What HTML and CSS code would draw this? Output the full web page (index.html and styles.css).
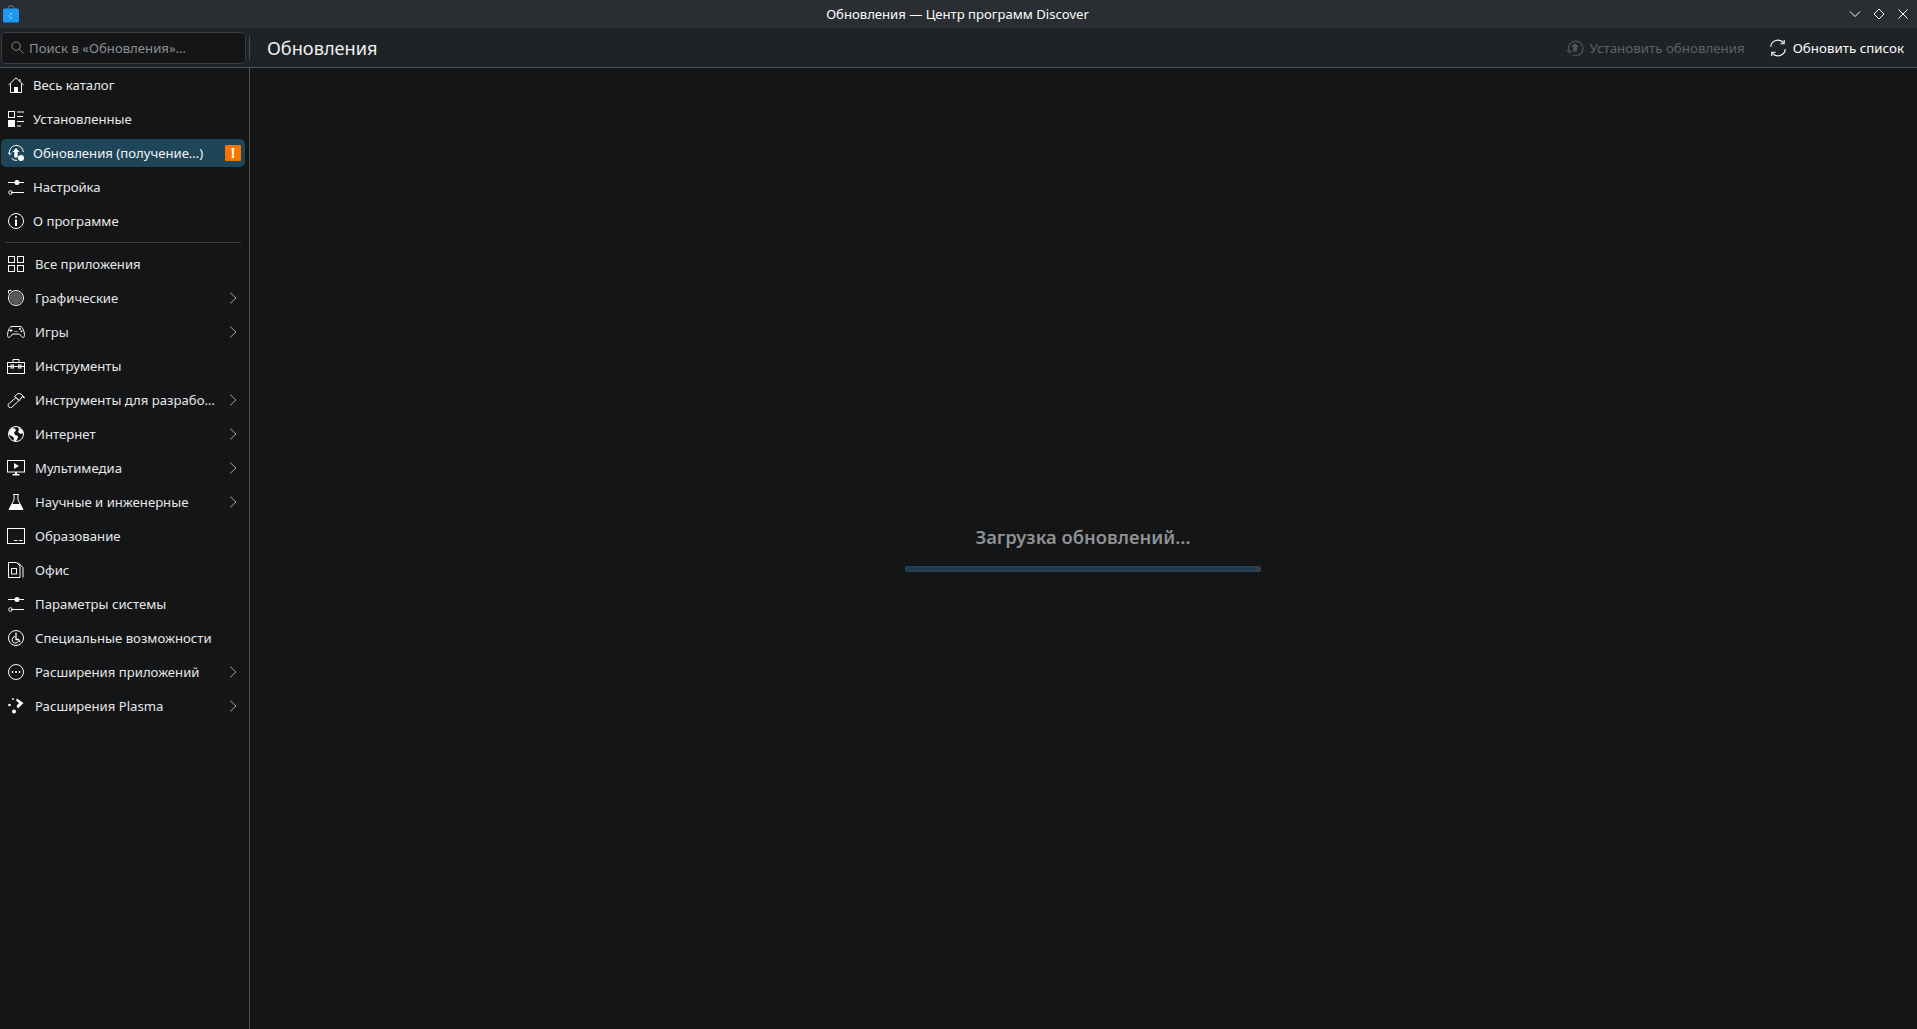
FILE: index.html
```html
<!DOCTYPE html>
<html lang="ru">
<head>
<meta charset="utf-8">
<title>Обновления — Центр программ Discover</title>
<link rel="stylesheet" href="styles.css">
</head>
<body>
<div class="window">
  <header class="titlebar">
    <svg class="app-icon" viewBox="0 0 16 18"><path class="bag-handle" d="M5 6V3a3 2.2 0 0 1 6 0v3"/><rect class="bag" x="0" y="3.500" width="16" height="14" rx="1.500"/><circle class="bag-dot" cx="8" cy="9" r=".8"/><circle class="bag-dot" cx="6" cy="11" r=".6"/><circle class="bag-dot" cx="8" cy="13" r=".7"/></svg>
    <div class="title">Обновления — Центр программ Discover</div>
    <div class="win-controls">
      <svg class="wc" viewBox="0 0 12 12"><path d="M1 3.500l5 5 5-5"/></svg>
      <svg class="wc" viewBox="0 0 12 12"><path d="M6 1l5 5-5 5-5-5z"/></svg>
      <svg class="wc" viewBox="0 0 12 12"><path d="M1.500 1.500l9 9M10.500 1.500l-9 9"/></svg>
    </div>
  </header>
  <div class="toolbar">
    <div class="search">
      <svg class="search-icon" viewBox="0 0 14 14"><circle cx="5.500" cy="5.500" r="4.500"/><path d="M9 9l4.500 4.500"/></svg>
      <span>Поиск в «Обновления»…</span>
    </div>
    <div class="tb-sep"></div>
    <h1 class="page-title">Обновления</h1>
    <div class="actions">
      <div class="action disabled">
        <svg class="ic16" viewBox="0 0 16 16"><path d="M3 11.500A6.500 6.500 0 1 1 6 14.300"/><path d="M1 10l2 2 2-2"/><path class="fill" d="M8 3.500L11.500 7H9.700v4H6.300V7H4.500z"/></svg>
        <span>Установить обновления</span>
      </div>
      <div class="action">
        <svg class="ic16" viewBox="0 0 16 16"><path d="M1.500 7A6.500 6.500 0 0 1 13 3.500"/><path d="M13.500.8v3.400h-3.400"/><path d="M14.500 9A6.500 6.500 0 0 1 3 12.500"/><path d="M2.500 15.200v-3.400h3.400"/></svg>
        <span>Обновить список</span>
      </div>
    </div>
  </div>
  <div class="main">
    <nav class="sidebar">
      <a class="item">
        <svg class="ic" viewBox="0 0 16 16"><path d="M.5 8L8 .8 15.500 8M2.500 6.500v9h11v-9"/><path class="fill" d="M6 15.500V10h4v5.500z"/><path d="M12 2v2.500"/></svg>
        <span class="label">Весь каталог</span>
      </a>
      <a class="item">
        <svg class="ic" viewBox="0 0 16 16"><rect x=".5" y=".5" width="6" height="6"/><rect class="fill" x="0" y="9" width="7" height="7"/><path d="M9 1h7M9 5.500h6M9 10.500h7M9 15h4"/></svg>
        <span class="label">Установленные</span>
      </a>
      <a class="item selected">
        <svg class="ic" viewBox="0 0 16 16"><path d="M1.500 9A7 7 0 1 1 15.300 7"/><path d="M.2 7.500l1.500 2.200 2-1.700"/><path d="M3.500 13.500A7 7 0 0 0 9 15.400"/><path class="fill" d="M8 3L11.500 7H9.700V12.500H6.300V7H4.500z"/><circle class="fill" cx="13" cy="13" r="3"/></svg>
        <span class="label">Обновления (получение…)</span>
        <span class="badge">!</span>
      </a>
      <a class="item">
        <svg class="ic" viewBox="0 0 16 16"><path d="M0 3.500h16M3 13.500h13"/><circle class="fill" cx="9" cy="3.500" r="2.500"/><circle cx="2.500" cy="13.500" r="1.800"/></svg>
        <span class="label">Настройка</span>
      </a>
      <a class="item">
        <svg class="ic" viewBox="0 0 16 16"><circle cx="8" cy="8" r="7.500"/><path d="M8 6.500V13" stroke-width="2"/><circle class="fill" cx="8" cy="4" r="1.100"/></svg>
        <span class="label">О программе</span>
      </a>
      <div class="nav-sep"></div>
      <a class="item cat">
        <svg class="ic" viewBox="0 0 16 16"><rect x=".5" y=".5" width="6" height="6"/><rect x="9.500" y=".5" width="6" height="6"/><rect x=".5" y="9.500" width="6" height="6"/><rect x="9.500" y="9.500" width="6" height="6"/></svg>
        <span class="label">Все приложения</span>
      </a>
      <a class="item cat">
        <svg class="ic" viewBox="0 0 16 16"><circle class="grey" cx="8" cy="8" r="6.500"/><circle cx="8" cy="8" r="7.500"/><path d="M.5 3.500V.5h3"/></svg>
        <span class="label">Графические</span>
        <svg class="chev" viewBox="0 0 8 12"><path d="M1 .5L7 6l-6 5.500"/></svg>
      </a>
      <a class="item cat">
        <svg class="ic wide" viewBox="0 0 18 16"><path d="M5 2.500h8c3 0 4.500 6 4.500 9 0 2-2 2.500-3 1l-2-2.500H5.500l-2 2.500c-1 1.500-3 1-3-1 0-3 1.500-9 4.500-9z"/><path d="M4 5v3M2.500 6.500h3"/><circle class="fill" cx="13" cy="5" r="1"/><circle class="fill" cx="14.500" cy="7.300" r="1"/><path d="M7.500 7.500h3" stroke-dasharray="1 1"/></svg>
        <span class="label">Игры</span>
        <svg class="chev" viewBox="0 0 8 12"><path d="M1 .5L7 6l-6 5.500"/></svg>
      </a>
      <a class="item cat">
        <svg class="ic wide" viewBox="0 0 18 16"><rect x=".5" y="4.500" width="17" height="11"/><path d="M6 4.500V1.500h6v3M.5 8.500h17"/><rect x="4" y="7" width="2.500" height="3"/><rect x="11.500" y="7" width="2.500" height="3"/></svg>
        <span class="label">Инструменты</span>
      </a>
      <a class="item cat">
        <svg class="ic wide" viewBox="0 0 18 16"><path d="M1 12.500L9 5.500l3 3-8 7.500c-1 .5-3.500-2-3-3.500z"/><path d="M7.500 4.500L11 1.500c3 0 5 1.500 6.500 4.500L15 4.500l-2.500 4z"/></svg>
        <span class="label">Инструменты для разрабо…</span>
        <svg class="chev" viewBox="0 0 8 12"><path d="M1 .5L7 6l-6 5.500"/></svg>
      </a>
      <a class="item cat">
        <svg class="ic" viewBox="0 0 16 16"><circle cx="8" cy="8" r="7.500"/><path class="fill" d="M3 2l4 .5 1 2-2 2 1 2.500 3 1-.5 3-2 2.500-1.500-.3-.5-4-4-2.500L.5 7zM10 1l4 3 1.500 3-3 1-2.500-2 1-2z"/></svg>
        <span class="label">Интернет</span>
        <svg class="chev" viewBox="0 0 8 12"><path d="M1 .5L7 6l-6 5.500"/></svg>
      </a>
      <a class="item cat">
        <svg class="ic wide" viewBox="0 0 18 16"><rect x=".5" y=".5" width="17" height="11.500"/><path class="fill" d="M7 3l5 3-5 3zM8 12h2v2H8zM5.500 14h7v1.500h-7z"/></svg>
        <span class="label">Мультимедиа</span>
        <svg class="chev" viewBox="0 0 8 12"><path d="M1 .5L7 6l-6 5.500"/></svg>
      </a>
      <a class="item cat">
        <svg class="ic" viewBox="0 0 16 16"><path d="M5 .5h6M6 .5V6L1 15.500h14L10 6V.5"/><path class="fill" d="M4 10h8l3 5.500H1z"/></svg>
        <span class="label">Научные и инженерные</span>
        <svg class="chev" viewBox="0 0 8 12"><path d="M1 .5L7 6l-6 5.500"/></svg>
      </a>
      <a class="item cat">
        <svg class="ic wide" viewBox="0 0 18 16"><rect x=".5" y=".5" width="17" height="15"/><path d="M7 12.500h3.500M12 12.500h3.500"/></svg>
        <span class="label">Образование</span>
      </a>
      <a class="item cat">
        <svg class="ic" viewBox="0 0 16 16"><path d="M.5.5h8l3.500 3.500v11.500H.5z"/><path d="M10 .5l5 5v10"/><rect x="3.500" y="6.500" width="5" height="5.500"/></svg>
        <span class="label">Офис</span>
      </a>
      <a class="item cat">
        <svg class="ic" viewBox="0 0 16 16"><path d="M0 3.500h16M3 13.500h13"/><circle class="fill" cx="9" cy="3.500" r="2.500"/><circle cx="2.500" cy="13.500" r="1.800"/></svg>
        <span class="label">Параметры системы</span>
      </a>
      <a class="item cat">
        <svg class="ic wide" viewBox="0 0 18 16"><circle cx="9" cy="8" r="7.500"/><path d="M8 6.500a3.300 3.300 0 1 0 3.500 4.500"/><path d="M9 5v4.500h2.500l1.500 2.500" stroke-width="1.300"/><circle class="fill" cx="9" cy="3.800" r="1"/></svg>
        <span class="label">Специальные возможности</span>
      </a>
      <a class="item cat">
        <svg class="ic" viewBox="0 0 16 16"><circle cx="8" cy="8" r="7.500"/><circle class="fill" cx="4.500" cy="8" r="1"/><circle class="fill" cx="8" cy="8" r="1"/><circle class="fill" cx="11.500" cy="8" r="1"/></svg>
        <span class="label">Расширения приложений</span>
        <svg class="chev" viewBox="0 0 8 12"><path d="M1 .5L7 6l-6 5.500"/></svg>
      </a>
      <a class="item cat">
        <svg class="ic" viewBox="0 0 16 16"><path class="fill" d="M9 .5L15.500 5 10 10.500 8.500 8l2.500-3-3-2.500z"/><circle class="fill" cx="6" cy="13.500" r="2"/><circle class="fill" cx="1.500" cy="7" r="1.300"/><circle class="fill" cx="5" cy="1" r=".9"/></svg>
        <span class="label">Расширения Plasma</span>
        <svg class="chev" viewBox="0 0 8 12"><path d="M1 .5L7 6l-6 5.500"/></svg>
      </a>
    </nav>
    <main class="content">
      <div class="loading">
        <div class="loading-text">Загрузка обновлений…</div>
        <div class="progress"></div>
      </div>
    </main>
  </div>
</div>
</body>
</html>
```
FILE: styles.css
```css
* { box-sizing: border-box; }
html, body { margin: 0; height: 100%; }
body {
  background: #141517;
  color: #fcfcfc;
  font-family: "Noto Sans", sans-serif;
  font-size: 13.15px;
  overflow: hidden;
}
.window { display: flex; flex-direction: column; height: 1029px; }
svg { display: block; flex: none; fill: none; stroke: currentColor; stroke-width: 1; }
svg .fill { fill: currentColor; stroke: none; }

.titlebar {
  height: 28px;
  flex: none;
  display: flex;
  align-items: center;
  position: relative;
  background: #2a2e32;
}
.app-icon { width: 16px; height: 18px; margin: 0 0 0 3px; color: #fff; stroke: none; }
.bag { fill: #1d99f3; stroke: none; }
.bag-handle { stroke: #5a7f9c; fill: none; }
.bag-dot { fill: #e8f4fd; }
.title {
  position: absolute;
  left: 0;
  right: 2px;
  text-align: center;
  color: #fcfcfc;
  font-size: 13.1px;
}
.win-controls {
  position: absolute;
  right: 0;
  top: 8px;
  display: flex;
  gap: 12px;
  padding-right: 8px;
}
.wc { width: 12px; height: 12px; }

.toolbar {
  height: 40px;
  flex: none;
  display: flex;
  align-items: center;
  background: #202326;
  border-bottom: 1px solid #53565a;
  padding: 0 0 0 1px;
}
.search {
  width: 245px;
  height: 32px;
  display: flex;
  align-items: center;
  gap: 5px;
  padding-left: 9px;
  background: #141517;
  border: 1px solid #3a3d41;
  border-radius: 5px;
  color: #8d9093;
}
.search-icon { width: 13px; height: 13px; }
.tb-sep { width: 1px; height: 24px; margin: 0 0 0 3px; background: #4a4d50; }
.page-title {
  margin: 0 0 0 17px;
  font-size: 18.2px;
  font-weight: 400;
  color: #eff0f1;
}
.actions { margin-left: auto; display: flex; align-items: center; gap: 24px; padding-right: 13px; font-size: 13.33px; }
.action { display: flex; align-items: center; gap: 6px; }
.action.disabled { color: #5e6164; }
.action.disabled .ic16 { opacity: .8; }
.ic16 { width: 18px; height: 18px; }

.main { flex: 1; display: flex; min-height: 0; }
.sidebar {
  width: 250px;
  flex: none;
  border-right: 1px solid #4b4e51;
  padding: 0 4px 0 1px;
  display: flex;
  flex-direction: column;
}
.item {
  height: 34px;
  flex: none;
  display: flex;
  align-items: center;
  padding: 0 6px 0 7px;
  color: #e6e7e8;
  position: relative;
}
.item.selected::before {
  content: "";
  position: absolute;
  left: 0;
  right: 0;
  top: 3px;
  bottom: 3px;
  background: #1e4558;
  border-radius: 5px;
}
.item > * { position: relative; }
.ic { width: 16px; height: 16px; color: #fcfcfc; }
.ic.wide { width: 18px; margin-left: -1px; margin-right: -1px; }
.label {
  margin-left: 9px;
  flex: 1;
  white-space: nowrap;
  overflow: hidden;
}
.cat .label { margin-left: 11px; }
.grey { fill: #56585b; stroke: none; }
.badge {
  width: 16px;
  height: 16px;
  flex: none;
  background: #f67400;
  color: #fff;
  font-weight: 700;
  font-size: 14px;
  line-height: 16px;
  text-align: center;
  border-radius: 1px;
  margin-right: -2px;
}
.selected .label { color: #f2f3f4; }
.chev { width: 8px; height: 12px; color: #a0a2a4; margin-right: 2px; }
.nav-sep { height: 1px; margin: 4px; background: #3c3f42; flex: none; }

.content {
  flex: 1;
  display: flex;
  align-items: center;
  justify-content: center;
  padding-right: 1px;
}
.loading {
  width: 356px;
  margin-top: -1px;
  display: flex;
  flex-direction: column;
  align-items: center;
  gap: 17px;
}
.loading-text { font-size: 18.4px; font-weight: 600; color: #8f9193; line-height: 25px; }
.progress {
  width: 100%;
  height: 6px;
  border-radius: 3px;
  background: linear-gradient(to right, #1e3c4e 98%, #3a3d40 99%);
  box-shadow: inset 0 0 0 1px #25465a;
}
```
